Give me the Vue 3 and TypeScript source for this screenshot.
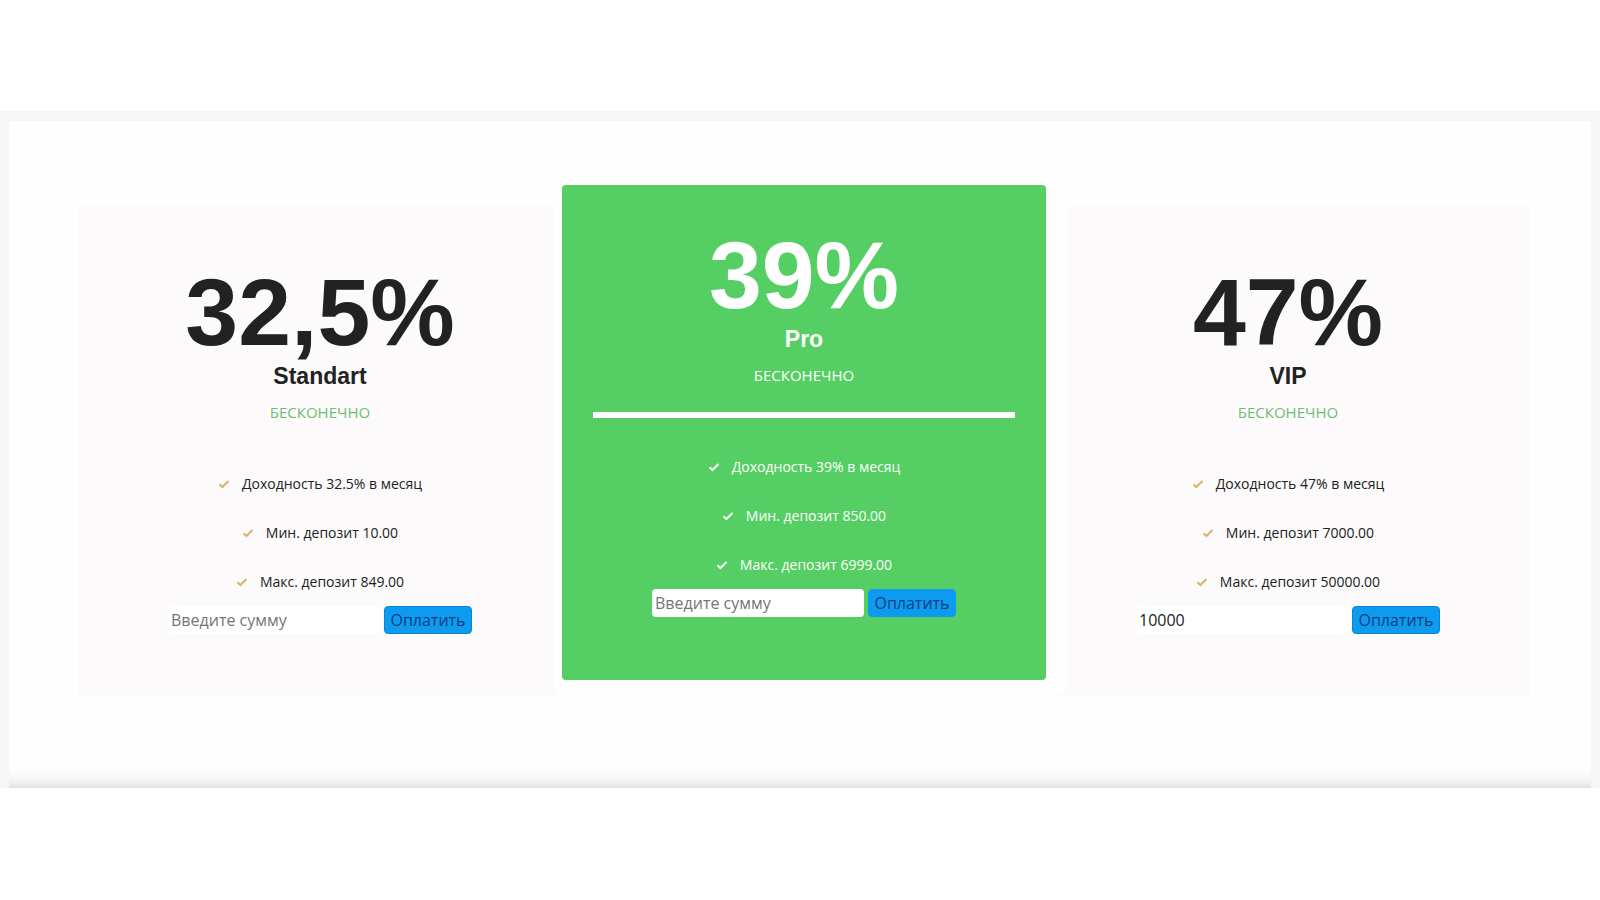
<script setup lang="ts">
import { ref } from 'vue'

interface Plan {
  id: string
  rate: string
  name: string
  features: string[]
  featured: boolean
  amount: string
}

const plans = ref<Plan[]>([
  {
    id: 'standart',
    rate: '32,5%',
    name: 'Standart',
    features: ['Доходность 32.5% в месяц', 'Мин. депозит 10.00', 'Макс. депозит 849.00'],
    featured: false,
    amount: '',
  },
  {
    id: 'pro',
    rate: '39%',
    name: 'Pro',
    features: ['Доходность 39% в месяц', 'Мин. депозит 850.00', 'Макс. депозит 6999.00'],
    featured: true,
    amount: '',
  },
  {
    id: 'vip',
    rate: '47%',
    name: 'VIP',
    features: ['Доходность 47% в месяц', 'Мин. депозит 7000.00', 'Макс. депозит 50000.00'],
    featured: false,
    amount: '10000',
  },
])
</script>

<template>
  <main class="page">
    <section class="pricing">
      <article v-for="plan in plans" :key="plan.id" class="plan" :class="{ featured: plan.featured }">
        <p class="rate">{{ plan.rate }}</p>
        <h2 class="name">{{ plan.name }}</h2>
        <p class="term">БЕСКОНЕЧНО</p>
        <hr class="rule" />
        <ul class="features">
          <li v-for="feature in plan.features" :key="feature">
            <svg class="tick" viewBox="0 0 12 12" aria-hidden="true">
              <path d="M1.5 6.2 4.4 9 10.5 3" />
            </svg>
            <span>{{ feature }}</span>
          </li>
        </ul>
        <form class="pay" @submit.prevent>
          <input v-model="plan.amount" type="text" placeholder="Введите сумму" :aria-label="`Введите сумму, ${plan.name}`" />
          <button type="submit">Оплатить</button>
        </form>
      </article>
    </section>
  </main>
</template>

<style>
body {
  margin: 0;
  background: #fff;
}
</style>

<style scoped>
.page {
  padding: 111px 0;
  font-family: "Open Sans", "Noto Sans", sans-serif;
  color: #222;
}

.pricing {
  display: grid;
  grid-template-columns: repeat(3, 1fr);
  align-items: start;
  padding: 64px 61px 92px 69px;
  border: solid #f6f6f6;
  border-width: 10px 9px 0;
  background: linear-gradient(to top, #e2e2e2, #f4f4f4 8px, #fefefe 20px);
}

.plan {
  display: flex;
  flex-direction: column;
  align-items: center;
  box-sizing: border-box;
  min-height: 490px;
  margin-top: 21px;
  padding: 56px 31px 32px;
  background: #fcfafb;
}

.plan.featured {
  position: relative;
  min-height: 495px;
  margin-top: 0;
  padding-top: 40px;
  border-radius: 4px;
  background: #55cf63;
  box-shadow: 7px 0 0 15px #fefefe;
  color: #fff;
}

.rate {
  margin: 0;
  font: bold 95px/100px "Liberation Sans", Arial, sans-serif;
}

.name {
  margin: 0;
  font: bold 23px/28px "Liberation Sans", Arial, sans-serif;
}

.term {
  margin: 12px 0 0;
  color: #6fbd75;
  font-size: 15px;
  line-height: 20px;
}

.featured .term {
  color: #fff;
}

.rule {
  width: 100%;
  height: 6px;
  margin: 27px 0 0;
  border: 0;
  background: transparent;
}

.featured .rule {
  background: #fff;
}

.features {
  margin: 4px 0 0;
  padding: 0;
  list-style: none;
}

.featured .features {
  margin-top: 24px;
}

.features li {
  display: flex;
  align-items: center;
  justify-content: center;
  gap: 12px;
  height: 49px;
  font-size: 14px;
}

.tick {
  width: 12px;
  height: 12px;
  fill: none;
  stroke: #d9b36a;
  stroke-width: 2;
}

.featured .tick {
  stroke: #fff;
}

.pay {
  display: flex;
  gap: 4px;
}

.pay input,
.pay button {
  box-sizing: border-box;
  height: 28px;
  border: 0;
  border-radius: 4px;
  font: 16px "Open Sans", "Noto Sans", sans-serif;
}

.pay input {
  width: 212px;
  padding: 0 3px;
  background: #fff;
  color: #222;
}

.pay input::placeholder {
  color: #757575;
  opacity: 1;
}

.pay button {
  width: 88px;
  padding: 0;
  border: 1px solid #0b86cf;
  background: #0d9bf2;
  color: #0a3f78;
}

.featured .pay button {
  border-color: #0d9bf2;
}
</style>
